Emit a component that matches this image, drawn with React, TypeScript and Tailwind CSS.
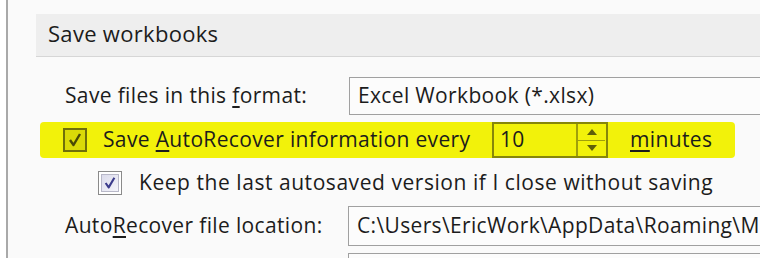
import React from "react";

function YellowCheck() {
  return (
    <div className="w-[24px] h-[24px] border-2 border-[#70700a] bg-[#dada08] flex items-center justify-center shrink-0">
      <svg width="16" height="16" viewBox="0 0 16 16">
        <path d="M3 8 L6.5 13 L13 2" fill="none" stroke="#4a4a05" strokeWidth="2.4" strokeLinejoin="round" />
      </svg>
    </div>
  );
}

function BlueCheck() {
  return (
    <div className="w-[24px] h-[24px] border border-[#8a8a8a] p-[2px] bg-white shrink-0">
      <div className="w-full h-full bg-gradient-to-br from-[#dcdcec] to-[#f4f4fa] border border-[#b8b8c8] flex items-center justify-center">
        <svg width="14" height="14" viewBox="0 0 16 16">
          <path d="M3 8 L6.5 13 L13 2" fill="none" stroke="#3c3c8c" strokeWidth="2.4" strokeLinejoin="round" />
        </svg>
      </div>
    </div>
  );
}

export default function App() {
  return (
    <div className="w-[760px] h-[258px] overflow-hidden flex bg-white font-['Open_Sans',sans-serif] text-[#1c1c1c] tracking-[0.35px]">
      <div className="w-[6px] shrink-0 bg-white" />
      <div className="w-[2px] shrink-0 bg-[#a9a9a9]" />
      <div className="flex-1 min-w-0 bg-[#fafafa] flex flex-col pt-[14px]">
        <div className="ml-[28px] h-[43px] shrink-0 bg-[#eeeeee] border-b border-[#d6d6d6] flex items-center pl-[12px] pb-[3px] text-[22px] tracking-[0.3px]">
          Save workbooks
        </div>

        <div className="mt-[20px] h-[38px] shrink-0 flex items-center">
          <div className="ml-[57px] w-[284px] shrink-0 text-[21px] whitespace-nowrap">
            Save files in this <span className="underline underline-offset-[3px]">f</span>ormat:
          </div>
          <div className="w-[440px] h-[38px] shrink-0 border border-[#a0a0a0] border-r-0 bg-[#fcfcfc] flex items-center pl-[8px] text-[21px] whitespace-nowrap">
            Excel Workbook (*.xlsx)
          </div>
        </div>

        <div className="mt-[7px] ml-[32px] w-[695px] h-[36px] shrink-0 bg-[#f2f20a] rounded-[4px] flex items-center">
          <div className="ml-[23px]">
            <YellowCheck />
          </div>
          <div className="ml-[16px] w-[389px] shrink-0 text-[21px] whitespace-nowrap">
            Save <span className="underline underline-offset-[3px]">A</span>utoRecover information every
          </div>
          <div className="w-[116px] h-[36px] shrink-0 border-2 border-[#87870a] flex items-stretch">
            <div className="flex-1 flex items-center pl-[6px] text-[21px]">10</div>
            <div className="w-[29px] mr-[1px] border-l-2 border-[#a0a00a] flex flex-col">
              <div className="flex-1 border-b border-[#a0a00a] flex items-center justify-center">
                <svg width="10" height="6" viewBox="0 0 10 6"><path d="M0 6 L5 0 L10 6 Z" fill="#60600a" /></svg>
              </div>
              <div className="flex-1 flex items-center justify-center">
                <svg width="10" height="6" viewBox="0 0 10 6"><path d="M0 0 L5 6 L10 0 Z" fill="#60600a" /></svg>
              </div>
            </div>
          </div>
          <div className="ml-[22px] text-[21px] whitespace-nowrap">
            <span className="underline underline-offset-[3px]">m</span>inutes
          </div>
        </div>

        <div className="mt-[12px] ml-[90px] h-[25px] shrink-0 flex items-center">
          <BlueCheck />
          <div className="ml-[17px] text-[21px] whitespace-nowrap tracking-[0.55px]">
            Keep the last autosaved version if I close without saving
          </div>
        </div>

        <div className="mt-[11px] h-[40px] shrink-0 flex items-center">
          <div className="ml-[57px] w-[283px] shrink-0 text-[21px] whitespace-nowrap">
            Auto<span className="underline underline-offset-[3px]">R</span>ecover file location:
          </div>
          <div className="w-[440px] h-[40px] shrink-0 border border-[#a0a0a0] border-r-0 bg-[#fcfcfc] flex items-center pl-[8px] text-[21px] whitespace-nowrap overflow-hidden">
            C:\Users\EricWork\AppData\Roaming\M
          </div>
        </div>

        <div className="mt-[7px] ml-[340px] w-[440px] h-[40px] shrink-0 border border-[#a0a0a0] border-r-0 bg-[#fcfcfc]" />
      </div>
    </div>
  );
}
